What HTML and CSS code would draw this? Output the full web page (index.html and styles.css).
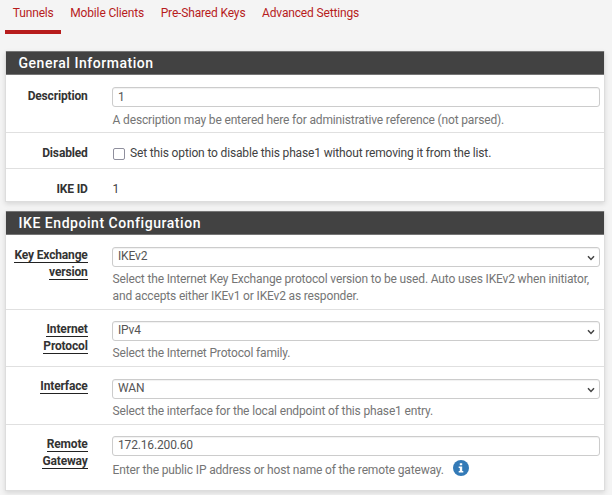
FILE: index.html
```html
<!DOCTYPE html>
<html lang="en">
<head>
<meta charset="utf-8">
<title>Tunnels</title>
<link rel="stylesheet" href="styles.css">
</head>
<body>
<nav class="tabs">
  <a class="tab active">Tunnels</a>
  <a class="tab">Mobile Clients</a>
  <a class="tab">Pre-Shared Keys</a>
  <a class="tab">Advanced Settings</a>
</nav>
<section class="panel">
  <h2>General Information</h2>
  <div class="row description">
    <div class="label"><span>Description</span></div>
    <div class="field"><div class="control">1</div><p class="help">A description may be entered here for administrative reference (not parsed).</p></div>
  </div>
  <div class="row disabled">
    <div class="label"><span>Disabled</span></div>
    <div class="field"><label class="check"><i class="box"></i><span>Set this option to disable this phase1 without removing it from the list.</span></label></div>
  </div>
  <div class="row ike-id">
    <div class="label"><span>IKE ID</span></div>
    <div class="field"><p class="static">1</p></div>
  </div>
</section>
<section class="panel">
  <h2>IKE Endpoint Configuration</h2>
  <div class="row exchange">
    <div class="label required"><span>Key Exchange<br>version</span></div>
    <div class="field"><div class="control">IKEv2<svg viewBox="0 0 8 6"><path d="M1 1.2 4 4.4 7 1.2"/></svg></div><p class="help">Select the Internet Key Exchange protocol version to be used. Auto uses IKEv2 when initiator,<br>and accepts either IKEv1 or IKEv2 as responder.</p></div>
  </div>
  <div class="row protocol">
    <div class="label required"><span>Internet<br>Protocol</span></div>
    <div class="field"><div class="control">IPv4<svg viewBox="0 0 8 6"><path d="M1 1.2 4 4.4 7 1.2"/></svg></div><p class="help">Select the Internet Protocol family.</p></div>
  </div>
  <div class="row interface">
    <div class="label required"><span>Interface</span></div>
    <div class="field"><div class="control">WAN<svg viewBox="0 0 8 6"><path d="M1 1.2 4 4.4 7 1.2"/></svg></div><p class="help">Select the interface for the local endpoint of this phase1 entry.</p></div>
  </div>
  <div class="row gateway">
    <div class="label required"><span>Remote<br>Gateway</span></div>
    <div class="field"><div class="control">172.16.200.60</div><div class="help-line"><p class="help">Enter the public IP address or host name of the remote gateway.</p><svg class="info" viewBox="0 0 16 16"><circle cx="8" cy="8" r="8"/><path d="M6.8 3.2h2.4v2H6.8zM5.7 6.4h3.5v4.5h1.1v1.7H5.7v-1.7h1.1V8.1H5.7z"/></svg></div></div>
  </div>
</section>
</body>
</html>
```
FILE: styles.css
```css
* { box-sizing: border-box; }
body {
  margin: 0;
  padding: 0 7px 0 5px;
  height: 495px;
  overflow: hidden;
  background: #f4f4f4;
  font: 12px/16.6px Roboto, sans-serif;
  letter-spacing: -.155px;
  color: #424242;
}
p, h2 { margin: 0; }
.tabs { display: flex; height: 51px; gap: 1px; }
.tab { height: 34px; padding: 5px 7.8px 0; color: #b71c1c; border-bottom: 4px solid transparent; white-space: nowrap; }
.active { border-color: #b71c1c; }
.panel {
  width: 600px;
  margin-bottom: 9px;
  background: #fff;
  border: 1px solid #ddd;
  border-top: 0;
  box-shadow: 0 2px 5px rgba(0, 0, 0, .12);
}
h2 {
  height: 24px;
  padding-left: 12.5px;
  background: #424242;
  border: solid #757575;
  border-width: 1px 0;
  color: #fff;
  font-size: 14px;
  font-weight: 500;
  line-height: 23px;
  letter-spacing: .54px;
}
.row { display: flex; padding-top: 12px; border-bottom: 1px solid #e0e0e0; }
.row:last-child { border-bottom: 0; }
.label { width: 81.7px; text-align: right; font-weight: 700; color: #333; white-space: nowrap; }
.required { line-height: 16.5px; }
.required span { border-bottom: 1px solid #222; }
.field { width: 488px; margin-left: 24.3px; white-space: nowrap; }
.control {
  display: flex;
  align-items: center;
  justify-content: space-between;
  height: 20px;
  padding: 0 4px 1px 5px;
  border: 1px solid #ccc;
  border-radius: 3px;
  box-shadow: inset 0 1px 1px rgba(0, 0, 0, .06);
  color: #555;
}
.control svg { width: 8px; height: 6px; margin-top: 2px; fill: none; stroke: #444; stroke-width: 1.5; }
.help { margin-top: 4px; padding-left: .6px; color: #757575; }
.static { padding-left: .6px; }
.description { height: 58px; }
.description .label { padding-top: 1px; }
.description .control { padding-bottom: 0; }
.description .help { margin-top: 5px; }
.disabled { height: 36px; }
.ike-id { height: 32px; }
.exchange { height: 75px; }
.protocol { height: 57px; padding-top: 11px; }
.interface { height: 58px; }
.interface .label { margin-top: -1px; }
.gateway { height: 65px; padding-top: 11px; }
.check { display: flex; align-items: center; gap: 5px; }
.box { width: 12px; height: 12px; margin: 1px 0 0 1px; border: 1px solid #8f8f9d; border-radius: 2px; }
.help-line { display: flex; gap: 9px; }
.help-line .help { margin-top: 6px; }
.info { width: 16px; height: 16px; margin-top: 4px; fill: #337ab7; }
.info path { fill: #fff; }
```
